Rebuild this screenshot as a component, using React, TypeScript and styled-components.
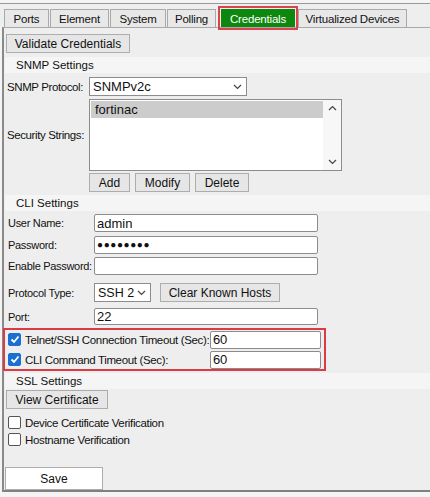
import React from "react";
import styled, { createGlobalStyle } from "styled-components";

const GlobalStyle = createGlobalStyle`
  html, body {
    margin: 0;
    padding: 0;
    background: #f4f4f4;
  }
  body {
    font-family: "Liberation Sans", Arial, sans-serif;
    font-size: 11px;
    color: #111;
  }
`;

const Frame = styled.div`
  width: 430px;
  height: 497px;
  box-sizing: border-box;
  padding-top: 3px;
  overflow: hidden;
`;

const TabStrip = styled.div`
  display: flex;
  align-items: flex-end;
  height: 23px;
  border-top: 1px solid #9a9a9a;
  background: #eeeeee;
  padding-left: 4px;
`;

const Tab = styled.div<{ $w: number; $active?: boolean }>`
  width: ${({ $w }) => $w}px;
  height: 18px;
  box-sizing: border-box;
  margin-right: ${({ $active }) => ($active ? 3 : 1)}px;
  margin-left: ${({ $active }) => ($active ? 4 : 0)}px;
  display: flex;
  align-items: center;
  justify-content: center;
  white-space: nowrap;
  font-size: 11.5px;
  letter-spacing: -0.2px;
  background: ${({ $active }) => ($active ? "#0d870d" : "#e8e8e8")};
  color: ${({ $active }) => ($active ? "#ffffff" : "#111")};
  border: 1px solid ${({ $active }) => ($active ? "#0d870d" : "#a9a9a9")};
  border-bottom: none;
  ${({ $active }) =>
    $active ? "outline: 2px solid #d9434e; outline-offset: 1px;" : ""}
`;

const Panel = styled.div`
  height: 465px;
  box-sizing: border-box;
  border-top: 1px solid #a9a9a9;
  border-left: 2px solid #8a8a8a;
  border-bottom: 2px solid #808080;
  margin-left: 2px;
  background: #eeeeee;
  padding: 6px 0 0 1px;
  display: flex;
  flex-direction: column;
`;

const Button = styled.button<{ $w: number; $h?: number; $white?: boolean }>`
  font-family: "Liberation Sans", Arial, sans-serif;
  font-size: 12px;
  width: ${({ $w }) => $w}px;
  height: ${({ $h }) => $h ?? 19}px;
  padding: 0;
  white-space: nowrap;
  border: 1px solid #adadad;
  background: ${({ $white }) => ($white ? "#ffffff" : "#e6e6e6")};
  color: #111;
  display: inline-flex;
  align-items: center;
  justify-content: center;
  box-sizing: border-box;
  line-height: 1;
`;

const SectionTitle = styled.div`
  background: #f5f5f5;
  height: 16px;
  display: flex;
  align-items: center;
  padding-left: 11px;
  font-size: 11.5px;
`;

const Grid = styled.div<{ $label: number; $pad: number; $gap?: number }>`
  display: grid;
  grid-template-columns: ${({ $label }) => $label}px 1fr;
  align-items: center;
  row-gap: ${({ $gap }) => $gap ?? 0}px;
  padding-left: ${({ $pad }) => $pad}px;
`;

const Label = styled.div<{ $big?: boolean }>`
  font-size: ${({ $big }) => ($big ? 11.5 : 11)}px;
  letter-spacing: ${({ $big }) => ($big ? -0.4 : -0.3)}px;
  white-space: nowrap;
`;

const Select = styled.div<{ $w: number; $small?: boolean }>`
  width: ${({ $w }) => $w}px;
  height: 19px;
  box-sizing: border-box;
  border: 1px solid #8c8c8c;
  background: #fff;
  display: flex;
  align-items: center;
  justify-content: space-between;
  padding: 0 4px 0 3px;
  white-space: nowrap;
  font-size: ${({ $small }) => ($small ? 12.5 : 13)}px;
`;

const Input = styled.div<{ $w: number; $h?: number }>`
  width: ${({ $w }) => $w}px;
  height: ${({ $h }) => $h ?? 18}px;
  box-sizing: border-box;
  border: 1px solid #8c8c8c;
  border-radius: 2px;
  background: #fff;
  display: flex;
  align-items: center;
  padding-left: 2px;
  font-size: 13px;
  flex-shrink: 0;
`;

const Dots = styled.span`
  font-size: 10px;
  letter-spacing: 0.6px;
`;

const ListBox = styled.div`
  width: 253px;
  height: 72px;
  box-sizing: border-box;
  border: 1px solid #8c8c8c;
  background: #fff;
  display: flex;
`;

const ListItems = styled.div`
  flex: 1;
  padding: 1px 0 0 1px;
`;

const ListItem = styled.div<{ $selected?: boolean }>`
  height: 17px;
  display: flex;
  align-items: center;
  padding-left: 4px;
  background: ${({ $selected }) => ($selected ? "#cccccc" : "transparent")};
  font-size: 13px;
`;

const ScrollBar = styled.div`
  width: 18px;
  display: flex;
  flex-direction: column;
  justify-content: space-between;
  align-items: center;
  padding: 5px 0 5px;
  background: #f7f7f7;
`;

const Row = styled.div<{ $gap?: number; $pad?: number }>`
  display: flex;
  align-items: center;
  gap: ${({ $gap }) => $gap ?? 5}px;
  padding-left: ${({ $pad }) => $pad ?? 0}px;
`;

const CheckList = styled.div`
  display: flex;
  flex-direction: column;
  padding-left: 3px;
`;

const Highlight = styled.div`
  border: 2px solid #dc3a45;
  margin-left: -2px;
  width: 323px;
  box-sizing: border-box;
  padding: 1px 0 1px 3px;
  display: flex;
  flex-direction: column;
  gap: 3px;
`;

const CheckRow = styled.div<{ $labelW?: number }>`
  display: flex;
  align-items: center;
  height: 17px;
  font-size: 11.5px;
  letter-spacing: -0.35px;
  & > span {
    width: ${({ $labelW }) => ($labelW ? `${$labelW}px` : "auto")};
    margin-left: 4px;
    white-space: nowrap;
  }
`;

const Box = styled.div<{ $checked?: boolean }>`
  width: 13px;
  height: 13px;
  box-sizing: border-box;
  border-radius: 2px;
  border: 1px solid ${({ $checked }) => ($checked ? "#1a6fd0" : "#555")};
  background: ${({ $checked }) => ($checked ? "#1a6fd0" : "#fff")};
  display: flex;
  align-items: center;
  justify-content: center;
  flex-shrink: 0;
`;

const Spacer = styled.div<{ $h: number }>`
  height: ${({ $h }) => $h}px;
  flex-shrink: 0;
`;

const Chevron = ({ up }: { up?: boolean }) => (
  <svg width="9" height="6" viewBox="0 0 9 6">
    <path
      d={up ? "M1 5 L4.5 1.5 L8 5" : "M1 1 L4.5 4.5 L8 1"}
      fill="none"
      stroke="#444"
      strokeWidth="1.2"
    />
  </svg>
);

const Check = ({ checked }: { checked?: boolean }) => (
  <Box $checked={checked}>
    {checked && (
      <svg width="10" height="9" viewBox="0 0 10 9">
        <path d="M1.5 4.5 L4 7 L8.5 1.5" fill="none" stroke="#fff" strokeWidth="1.8" />
      </svg>
    )}
  </Box>
);

const tabs: [string, number][] = [
  ["Ports", 45],
  ["Element", 59],
  ["System", 56],
  ["Polling", 49],
  ["Credentials", 74],
  ["Virtualized Devices", 109],
];

export default function App() {
  return (
    <Frame>
      <GlobalStyle />
      <TabStrip>
        {tabs.map(([t, w]) => (
          <Tab key={t} $w={w} $active={t === "Credentials"}>
            {t}
          </Tab>
        ))}
      </TabStrip>
      <Panel>
        <Row $pad={1}>
          <Button $w={124}>Validate Credentials</Button>
        </Row>
        <Spacer $h={4} />
        <SectionTitle>SNMP Settings</SectionTitle>
        <Spacer $h={4} />
        <Grid $label={82} $pad={2}>
          <Label $big>SNMP Protocol:</Label>
          <Select $w={158}>
            <span>SNMPv2c</span>
            <Chevron />
          </Select>
        </Grid>
        <Spacer $h={3} />
        <Grid $label={82} $pad={2}>
          <Label $big>Security Strings:</Label>
          <ListBox>
            <ListItems>
              <ListItem $selected>fortinac</ListItem>
            </ListItems>
            <ScrollBar>
              <Chevron up />
              <Chevron />
            </ScrollBar>
          </ListBox>
        </Grid>
        <Spacer $h={2} />
        <Grid $label={82} $pad={2}>
          <span />
          <Row>
            <Button $w={41}>Add</Button>
            <Button $w={55}>Modify</Button>
            <Button $w={54}>Delete</Button>
          </Row>
        </Grid>
        <Spacer $h={3} />
        <SectionTitle>CLI Settings</SectionTitle>
        <Spacer $h={3} />
        <Grid $label={86} $pad={3} $gap={3.5}>
          <Label>User Name:</Label>
          <Input $w={224}>admin</Input>
          <Label>Password:</Label>
          <Input $w={224}>
            <Dots>●●●●●●●●</Dots>
          </Input>
          <Label>Enable Password:</Label>
          <Input $w={224} />
        </Grid>
        <Spacer $h={8} />
        <Grid $label={86} $pad={3}>
          <Label>Protocol Type:</Label>
          <Row $gap={9}>
            <Select $w={57} $small>
              <span>SSH 2</span>
              <Chevron />
            </Select>
            <Button $w={120}>Clear Known Hosts</Button>
          </Row>
        </Grid>
        <Spacer $h={6} />
        <Grid $label={86} $pad={3}>
          <Label>Port:</Label>
          <Input $w={224} $h={17}>22</Input>
        </Grid>
        <Spacer $h={3} />
        <Highlight>
          <CheckRow $labelW={185}>
            <Check checked />
            <span>Telnet/SSH Connection Timeout (Sec):</span>
            <Input $w={111}>60</Input>
          </CheckRow>
          <CheckRow $labelW={185}>
            <Check checked />
            <span>CLI Command Timeout (Sec):</span>
            <Input $w={111}>60</Input>
          </CheckRow>
        </Highlight>
        <Spacer $h={2} />
        <SectionTitle>SSL Settings</SectionTitle>
        <Spacer $h={1} />
        <Row $pad={1}>
          <Button $w={102}>View Certificate</Button>
        </Row>
        <Spacer $h={5} />
        <CheckList>
          <CheckRow>
            <Check />
            <span>Device Certificate Verification</span>
          </CheckRow>
          <CheckRow>
            <Check />
            <span>Hostname Verification</span>
          </CheckRow>
        </CheckList>
        <Spacer $h={19} />
        <Row $pad={0}>
          <Button $w={98} $h={23} $white>
            Save
          </Button>
        </Row>
      </Panel>
    </Frame>
  );
}
